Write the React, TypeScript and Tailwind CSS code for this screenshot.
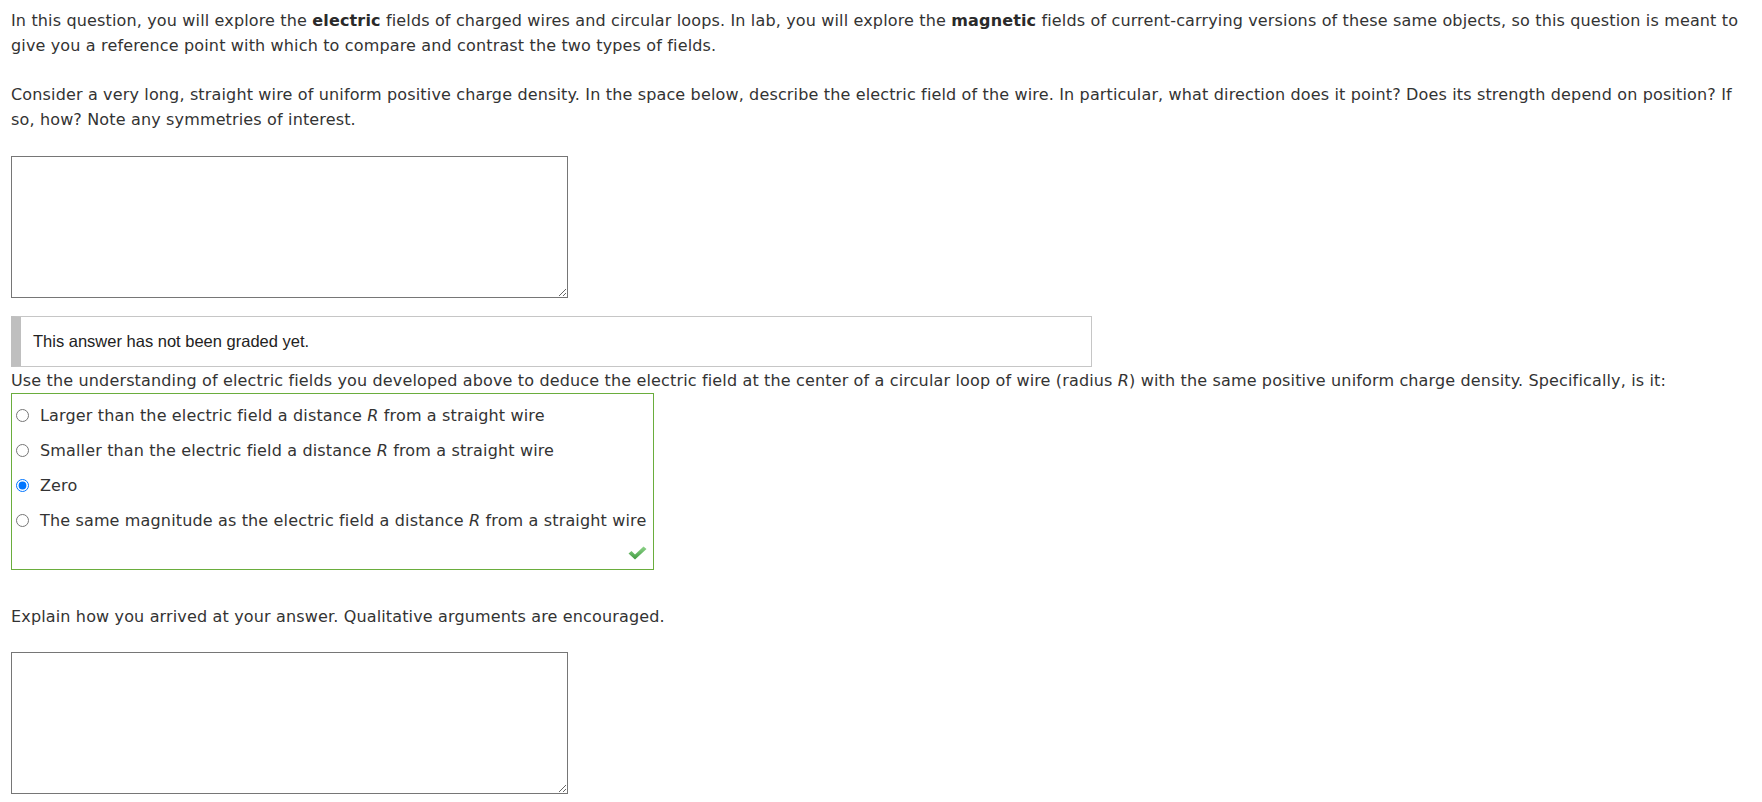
const font = { fontFamily: '"DejaVu Sans", "Verdana", sans-serif' };

const options = [
	{ id: "a", before: "Larger than the electric field a distance ", after: " from a straight wire" },
	{ id: "b", before: "Smaller than the electric field a distance ", after: " from a straight wire" },
	{ id: "c", before: "Zero", after: null },
	{ id: "d", before: "The same magnitude as the electric field a distance ", after: " from a straight wire" },
];

const Check = () => (
	<svg width="19" height="14" viewBox="0 0 19 14">
		<defs>
			<linearGradient id="chk" x1="0" y1="0" x2="0" y2="1">
				<stop offset="0" stopColor="#8fd48a" />
				<stop offset="1" stopColor="#3f9a3f" />
			</linearGradient>
		</defs>
		<path d="M0.5 7.5 L3.5 5 L7 8.5 L15.5 0.5 L18.5 3 L7 13.5 Z" fill="url(#chk)" />
	</svg>
);

export default function App() {
	return (
		<div
			className="bg-white min-h-screen pl-[11px] pr-[11px] pt-[8px] text-[16px] leading-[25px] tracking-[0.15px] text-[#333]"
			style={font}
		>
			<p>
				In this question, you will explore the <b className="text-[#2a2a2a]">electric</b> fields of charged wires and circular loops. In lab, you
				will explore the <b className="text-[#2a2a2a]">magnetic</b> fields of current-carrying versions of these same objects, so this question is
				meant to give you a reference point with which to compare and contrast the two types of fields.
			</p>
			<p className="mt-[24px]">
				Consider a very long, straight wire of uniform positive charge density. In the space below, describe the electric field of the wire. In
				particular, what direction does it point? Does its strength depend on position? If so, how? Note any symmetries of interest.
			</p>

			<textarea className="block mt-[24px] w-[557px] h-[142px] border border-[#767676] bg-white" />

			<div
				className="mt-[18px] w-[1081px] h-[51px] flex items-center border border-[#c6c6c6] border-l-[10px] border-l-[#bfbfbf] pl-[12px] text-[16.5px] tracking-normal text-[#222]"
				style={{ fontFamily: '"Liberation Sans", Arial, sans-serif' }}
			>
				This answer has not been graded yet.
			</div>

			<p className="mt-[1px]">
				Use the understanding of electric fields you developed above to deduce the electric field at the center of a circular loop of wire
				(radius <i>R</i>) with the same positive uniform charge density. Specifically, is it:
			</p>

			<div className="w-[643px] border border-[#6aad3d] pt-[4px]">
				{options.map((o) => (
					<label key={o.id} className="h-[35px] flex items-center whitespace-nowrap">
						<input
							type="radio"
							name="q"
							defaultChecked={o.id === "c"}
							className="ml-[4px] mr-[11px] w-[13px] h-[13px] shrink-0"
						/>
						<span>
							{o.before}
							{o.after !== null && (
								<>
									<i>R</i>
									{o.after}
								</>
							)}
						</span>
					</label>
				))}
				<div className="h-[31px] flex items-center justify-end pr-[6px] pb-[2px]">
					<Check />
				</div>
			</div>

			<p className="mt-[34px]">Explain how you arrived at your answer. Qualitative arguments are encouraged.</p>

			<textarea className="block mt-[23px] w-[557px] h-[142px] border border-[#767676] bg-white" />
		</div>
	);
}
